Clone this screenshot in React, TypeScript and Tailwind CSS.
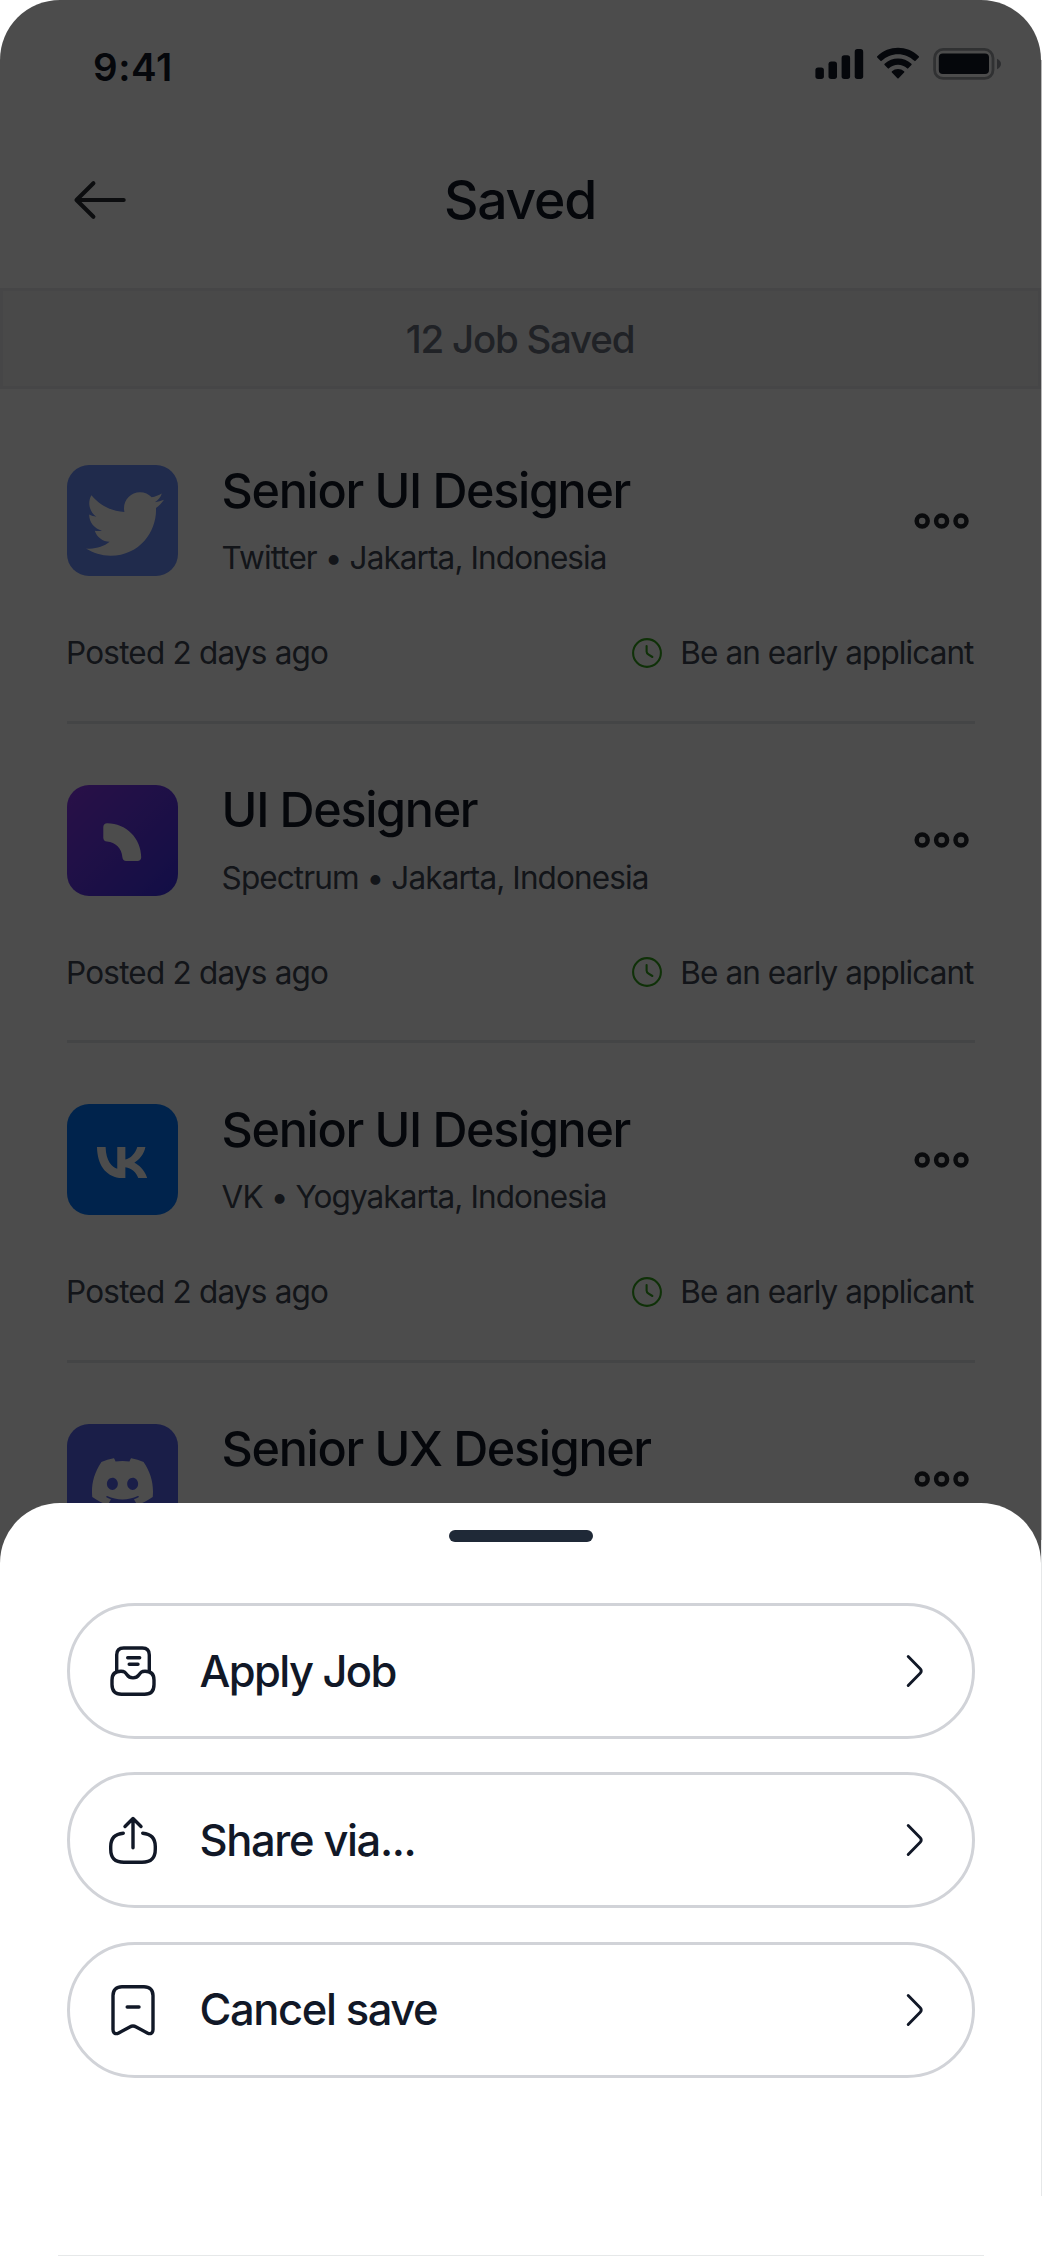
import React from "react";
import { FaTwitter } from "react-icons/fa";
import { SiDiscord } from "react-icons/si";

function StatusIcons() {
  return (
    <svg width="187" height="34" viewBox="815 47 187 34" fill="#111827">
      <rect x="815.4" y="67.4" width="8.5" height="11.6" rx="2.7" />
      <rect x="828.5" y="61.6" width="8.5" height="17.4" rx="2.7" />
      <rect x="841.6" y="55.3" width="8.5" height="23.7" rx="2.7" />
      <rect x="854.7" y="49" width="8.5" height="30" rx="2.7" />
      <g transform="translate(877 47.8) scale(2.75 2.8)">
        <path d="M7.637 2.277c2.216 0 4.347.852 5.953 2.379a.307.307 0 0 0 .433-.004l1.156-1.166a.322.322 0 0 0-.003-.456c-4.215-4.04-10.865-4.04-15.08 0a.322.322 0 0 0-.003.456L1.25 4.652a.307.307 0 0 0 .433.004c1.606-1.527 3.738-2.379 5.954-2.379Z" />
        <path d="M7.637 6.073c1.217 0 2.391.452 3.294 1.27a.309.309 0 0 0 .433-.006l1.155-1.167a.325.325 0 0 0-.006-.459c-2.748-2.556-7.003-2.556-9.751 0a.325.325 0 0 0-.005.459l1.155 1.167a.309.309 0 0 0 .433.006 4.908 4.908 0 0 1 3.292-1.27Z" />
        <path d="M9.95 8.627a.315.315 0 0 1-.094.23l-1.998 2.016a.312.312 0 0 1-.443 0L5.417 8.857a.315.315 0 0 1 .01-.457 3.422 3.422 0 0 1 4.419 0c.064.058.102.14.104.227Z" />
      </g>
      <rect x="934.6" y="49.4" width="58.4" height="29" rx="8.5" fill="none" stroke="#111827" strokeOpacity="0.4" strokeWidth="2.8" />
      <rect x="938.8" y="53.6" width="50.2" height="20.4" rx="4" />
      <path d="M997 58.8c2.5 1 4 3 4 5.2s-1.5 4.2-4 5.2Z" fillOpacity="0.45" />
    </svg>
  );
}

function BackArrow() {
  return (
    <svg width="54" height="42" viewBox="73 179 54 42" fill="none" stroke="#292D32" strokeWidth="4.1" strokeLinecap="round" strokeLinejoin="round">
      <path d="M93.4 183.2 76.5 200l16.9 16.8M77.5 200h46.2" />
    </svg>
  );
}

function SpectrumLogo() {
  return (
    <svg width="111" height="111" viewBox="0 0 111 111" fill="white">
      <path d="M36.3 42C36.3 39.8 38 38.3 40.2 38.3C59 38.3 74.2 53.5 74.2 72.3C74.2 74.4 72.7 76 70.5 76H59.2C57 76 55.6 74.4 55.4 72.3C54.8 63.5 48.5 57.2 40 56.6C37.8 56.4 36.3 55 36.3 52.8Z" />
    </svg>
  );
}

function VkLogo() {
  return (
    <svg width="50.3" height="31.4" viewBox="8.1 14.6 32.02 19.98" fill="white" className="mt-[6px]">
      <path d="M25.54 34.58C14.6 34.58 8.36 27.08 8.1 14.6H13.58C13.76 23.76 17.8 27.64 21 28.44V14.6H26.16V22.5C29.32 22.16 32.64 18.56 33.76 14.6H38.92C38.06 19.48 34.46 23.08 31.9 24.56C34.46 25.76 38.56 28.9 40.12 34.58H34.44C33.22 30.78 30.18 27.84 26.16 27.44V34.58H25.54Z" />
    </svg>
  );
}

function MoreDots() {
  return (
    <svg width="56" height="18" viewBox="0 0 56 18" fill="none" stroke="#24272c" strokeWidth="4.5">
      <circle cx="8.2" cy="9" r="5.5" />
      <circle cx="27.6" cy="9" r="5.5" />
      <circle cx="47" cy="9" r="5.5" />
    </svg>
  );
}

function ClockIcon() {
  return (
    <svg width="30" height="30" viewBox="0 0 30 30" fill="none" stroke="#35a31c" strokeWidth="2.1" strokeLinecap="round" strokeLinejoin="round">
      <circle cx="15" cy="15" r="13.9" />
      <path d="M14.6 8v5.6c0 1.3.5 2.1 1.6 2.8l4.2 2.6" />
    </svg>
  );
}

type Job = { title: string; sub: string; tile: string; logo: React.ReactNode };

const jobs: Job[] = [
  {
    title: "Senior UI Designer",
    sub: "Twitter • Jakarta, Indonesia",
    tile: "bg-[#6b8fff]",
    logo: <FaTwitter size={78} color="white" className="mt-[6px] ml-[5px]" />,
  },
  {
    title: "UI Designer",
    sub: "Spectrum • Jakarta, Indonesia",
    tile: "bg-linear-to-br from-[#8a38f0] to-[#3a2ee8]",
    logo: <SpectrumLogo />,
  },
  { title: "Senior UI Designer", sub: "VK • Yogyakarta, Indonesia", tile: "bg-[#0077ff]", logo: <VkLogo /> },
  {
    title: "Senior UX Designer",
    sub: "Discord • Jakarta, Indonesia",
    tile: "bg-[#5865f2]",
    logo: <SiDiscord size={61} color="white" className="mt-[4px]" />,
  },
];

function JobRow({ job }: { job: Job }) {
  return (
    <div className="flex h-[319.5px] shrink-0 flex-col border-b-[3px] border-[#e5e7eb] pt-[61px]">
      <div className="flex h-[111px] items-center">
        <div className={`flex size-[111px] shrink-0 items-center justify-center overflow-hidden rounded-[22px] ${job.tile}`}>
          {job.logo}
        </div>
        <div className="ml-[44px] flex-1 whitespace-nowrap">
          <div className="text-[48.5px] font-medium leading-[60px] tracking-[-1.34px] text-[#111827]">{job.title}</div>
          <div className="mt-[15.5px] text-[31.5px] leading-[44px] tracking-[-0.9px] text-[#404856]">{job.sub}</div>
        </div>
        <div className="mr-[5.5px]">
          <MoreDots />
        </div>
      </div>
      <div className="mt-[54px] flex h-[45px] items-center justify-between whitespace-nowrap text-[31.5px] leading-[45px] text-[#404856]">
        <span className="-ml-[0.5px] tracking-[-0.8px]">Posted 2 days ago</span>
        <span className="mr-[1.5px] flex items-center gap-[18px] tracking-[-0.92px]">
          <ClockIcon />
          Be an early applicant
        </span>
      </div>
    </div>
  );
}

function ApplyIcon() {
  return (
    <>
      <path d="M11.7 28V12C11.7 7.5 14 5 18.7 5H37.3C42 5 44.3 7.5 44.3 12V28" />
      <path d="M22.7 14.7h12M24.2 21.3h8.8" />
      <path d="M16 28.3C19.5 28.3 20.3 29.3 22 31.8C23.5 34 25.3 34.9 28 34.9C30.7 34.9 32.5 34 34 31.8C35.7 29.3 36.5 28.3 40 28.3C46 28.3 49 31.5 49 37V41.5C49 48 46 51.3 39.5 51.3H16.5C10 51.3 7 48 7 41.5V37C7 31.5 10 28.3 16 28.3Z" />
    </>
  );
}

function ShareIcon() {
  return (
    <>
      <path d="M37.7 21.2C46 21.9 50.3 26.5 50.3 34.5V37C50.3 46 46.3 50.3 37 50.3H19C9.7 50.3 5.7 46 5.7 37V34.5C5.7 26.5 10 21.9 18.3 21.2" />
      <path d="M28 35.7V7M20 14.5 28 6.5 36 14.5" />
    </>
  );
}

function UnsaveIcon() {
  return (
    <>
      <path d="M17 4.7H39C44.5 4.7 48 8 48 13.5V47.5C48 51.2 45.5 52.6 42.3 50.9L31.2 44.9C29.2 43.8 26.8 43.8 24.8 44.9L13.7 50.9C10.5 52.6 8 51.2 8 47.5V13.5C8 8 11.5 4.7 17 4.7Z" />
      <path d="M22.2 25h11.8" />
    </>
  );
}

const actions = [
  { label: "Apply Job", icon: <ApplyIcon />, spacing: "tracking-[-1.6px]" },
  { label: "Share via...", icon: <ShareIcon />, spacing: "tracking-[-1.37px]" },
  { label: "Cancel save", icon: <UnsaveIcon />, spacing: "tracking-[-1.4px]" },
];

function ActionSheet() {
  return (
    <div className="absolute left-0 top-[1503px] flex h-[752px] w-[1041px] flex-col items-center rounded-t-[60px] bg-white pt-[27px]">
      <div className="h-[12px] w-[144px] rounded-full bg-[#1f2937]" />
      <div className="mt-[61px] flex w-[908px] flex-col gap-[33.3px]">
        {actions.map((a) => (
          <button
            key={a.label}
            className="flex h-[136px] items-center rounded-full border-[3px] border-[#d1d3d8] pl-[35px] pr-[47px] text-[#111827]"
          >
            <svg width="56" height="56" viewBox="0 0 56 56" fill="none" stroke="currentColor" strokeWidth="3.4" strokeLinecap="round" strokeLinejoin="round">
              {a.icon}
            </svg>
            <span className={`mb-px ml-[39px] flex-1 text-left text-[43.5px] font-medium leading-[60px] ${a.spacing}`}>{a.label}</span>
            <svg width="20" height="36" viewBox="0 0 20 36" fill="none" stroke="currentColor" strokeWidth="2.9" strokeLinecap="round" strokeLinejoin="round">
              <path d="M3.2 3.6 15.2 15.7c1.4 1.4 1.4 3.2 0 4.6L3.2 32.4" />
            </svg>
          </button>
        ))}
      </div>
    </div>
  );
}

export default function App() {
  return (
    <div className="relative h-[2256px] w-[1042px] overflow-hidden bg-white font-[Inter,sans-serif]">
      {/* Saved jobs screen */}
      <div className="flex h-[2255px] w-[1041px] flex-col overflow-hidden bg-white">
        <div className="flex h-[133px] shrink-0 items-center justify-between pl-[93px] pr-[39px]">
          <span className="text-[38.5px] font-semibold leading-[48px] tracking-[0.6px] text-[#111827]">9:41</span>
          <div className="mb-[5px]">
            <StatusIcons />
          </div>
        </div>
        <div className="grid h-[155px] shrink-0 grid-cols-[73px_54px_1fr_128px] items-center pb-[22px]">
          <span />
          <BackArrow />
          <h1 className="text-center text-[53.5px] font-medium leading-[66px] tracking-[-1.25px] text-[#111827]">Saved</h1>
          <span />
        </div>
        <div className="flex h-[101px] shrink-0 items-center justify-center border-[3px] border-[#e9ebee] bg-[#f3f4f5] pr-px text-[38.5px] font-medium leading-[48px] tracking-[-1.25px] text-[#6b7280]">
          12 Job Saved
        </div>
        <div className="mt-[15px] flex flex-col pl-[66.6px] pr-[66px]">
          {jobs.map((job, i) => (
            <JobRow key={i} job={job} />
          ))}
        </div>
      </div>

      {/* Scrim, clipped to the rounded top of the device */}
      <div className="absolute left-0 top-0 h-[1640px] w-[1041px] rounded-t-[60px] bg-black/70" />
      <ActionSheet />

      {/* Hairlines along the device edge */}
      <div className="absolute right-0 top-[60px] h-[2136px] w-px bg-[linear-gradient(#b8b8b8_1480px,#e6e8e9_1480px)]" />
      <div className="absolute bottom-0 left-[58px] h-px w-[926px] bg-[#e6e8e9]" />
    </div>
  );
}
